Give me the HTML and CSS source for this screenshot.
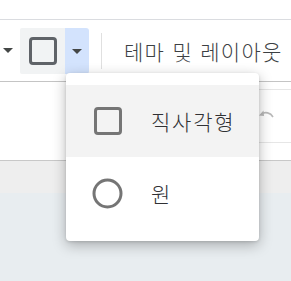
FILE: index.html
```html
<!DOCTYPE html>
<html lang="ko">
<head>
    <meta charset="UTF-8">
    <meta name="viewport" content="width=device-width, initial-scale=1.0">
    <title>도형</title>
    <link rel="stylesheet" href="styles.css">
</head>
<body>
    <div class="app">
        <div class="topbar"></div>
        <div class="toolbar">
            <span class="caret caret_left"></span>
            <div class="shape_btn">
                <div class="shape_main">
                    <svg width="28" height="28" viewBox="0 0 28 28"><rect x="1.5" y="1.5" width="25" height="25" rx="2.5" fill="none" stroke="#5f6368" stroke-width="3"/></svg>
                </div>
                <div class="shape_drop"><span class="caret"></span></div>
            </div>
            <div class="sep"></div>
            <div class="theme_label">테마 및 레이아웃</div>
        </div>
        <div class="workarea">
            <div class="side_panel">
                <div class="side_row">
                    <svg class="undo" width="16" height="10" viewBox="0 0 16 10"><path d="M15 8 C12.5 3.5 7 2.5 3.5 5" fill="none" stroke="#b9b9b9" stroke-width="1.6"/><path d="M1 6.5 L5.5 1.5 L6 7 Z" fill="#b9b9b9"/></svg>
                </div>
            </div>
        </div>
        <div class="strip"></div>
        <div class="canvas"></div>

        <!-- 도형 메뉴 -->
        <div class="menu">
            <div class="menu_item active">
                <svg width="28" height="28" viewBox="0 0 28 28"><rect x="1.5" y="1.5" width="25" height="25" rx="2.5" fill="none" stroke="#757575" stroke-width="3"/></svg>
                <span>직사각형</span>
            </div>
            <div class="menu_item">
                <svg width="31" height="31" viewBox="0 0 31 31"><circle cx="15.5" cy="15.5" r="13.5" fill="none" stroke="#757575" stroke-width="3"/></svg>
                <span>원</span>
            </div>
        </div>
    </div>
</body>
</html>
```

FILE: styles.css
```css
body {
    margin: 0;
    padding: 0;
    background: #ffffff;
    font-family: "Noto Sans CJK KR", "Noto Sans", sans-serif;
    font-weight: 300;
}
.app {
    position: relative;
    width: 291px;
    height: 281px;
    overflow: hidden;
    display: flex;
    flex-direction: column;
}
.topbar {
    height: 19px;
    border-bottom: 1px solid #dadce0;
    flex-shrink: 0;
}
.toolbar {
    height: 61px;
    border-bottom: 1px solid #c4c4c4;
    display: flex;
    align-items: center;
    flex-shrink: 0;
}
.caret {
    display: block;
    width: 0;
    height: 0;
    border-left: 5px solid transparent;
    border-right: 5px solid transparent;
    border-top: 5px solid #444746;
}
.caret_left {
    margin: 0 7px 0 3px;
}
.shape_btn {
    display: flex;
    height: 46px;
    margin-top: 1px;
}
.shape_main {
    width: 45px;
    background: #f1f3f4;
    border-radius: 2px 0 0 2px;
    display: flex;
    align-items: center;
    justify-content: center;
    padding-left: 1px;
    box-sizing: border-box;
}
.shape_drop {
    width: 24px;
    background: #d3e3fd;
    border-radius: 0 3px 3px 0;
    display: flex;
    align-items: center;
    justify-content: center;
}
.sep {
    width: 1px;
    height: 36px;
    background: #e0e0e0;
    margin: 0 22px 0 12px;
}
.theme_label {
    font-size: 21px;
    color: #3c4043;
    white-space: nowrap;
    letter-spacing: 1.3px;
}
.workarea {
    height: 78px;
    border-bottom: 1px solid #c8c8c8;
    display: flex;
    justify-content: flex-end;
    flex-shrink: 0;
}
.side_panel {
    width: 100px;
    padding-top: 7px;
}
.side_row {
    height: 52px;
    border-top: 1px solid #e6e6e6;
    border-bottom: 1px solid #e6e6e6;
    display: flex;
    align-items: center;
    justify-content: flex-end;
    padding-right: 17px;
}
.undo {
    margin-top: -4px;
}
.strip {
    height: 32px;
    background: #eeeeee;
    flex-shrink: 0;
}
.canvas {
    flex: 1;
    background: #e8edf0;
}
/* Menu */
.menu {
    position: absolute;
    left: 66px;
    top: 73px;
    width: 193px;
    padding: 12px 0;
    background: #ffffff;
    border-radius: 4px;
    box-shadow: 0 4px 14px rgba(0, 0, 0, 0.28), 0 1px 3px rgba(0, 0, 0, 0.12);
}
.menu_item {
    height: 72px;
    display: flex;
    align-items: center;
    font-size: 21px;
    color: #303134;
    letter-spacing: 1.8px;
}
.menu_item svg {
    display: block;
}
.menu_item:first-child svg {
    margin-left: 28px;
    margin-right: 29px;
}
.menu_item:last-child svg {
    margin-left: 26px;
    margin-right: 28px;
}
.menu_item.active {
    background: #f3f3f3;
}
```
